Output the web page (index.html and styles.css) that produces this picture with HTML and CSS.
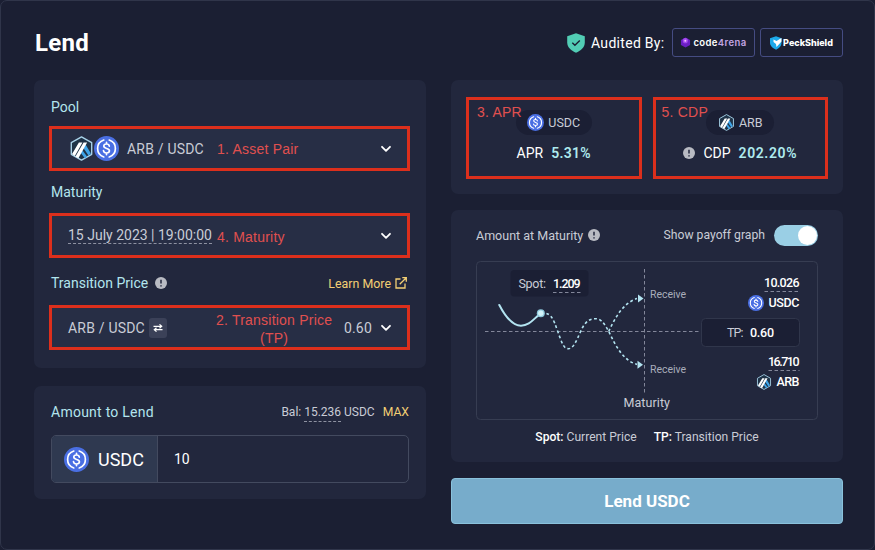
FILE: index.html
```html
<!DOCTYPE html>
<html lang="en">
<head>
  <meta charset="UTF-8" />
  <title>Lend</title>
  <meta name="viewport" content="width=device-width, initial-scale=1" />
  <link rel="stylesheet" href="styles.css">
</head>
<body>
  <!-- shared icons -->
  <svg class="sprite" width="0" height="0">
    <symbol id="usdc" viewBox="0 0 24 24">
      <circle cx="12" cy="12" r="12" fill="#4a6fe3" />
      <path d="M9.4 3.9a8.5 8.5 0 0 0 0 16.2M14.6 3.9a8.5 8.5 0 0 1 0 16.2" fill="none" stroke="#fff" stroke-width="1.6" stroke-linecap="round" />
      <path d="M14.7 9.7c-.2-1.3-1.2-2-2.7-2s-2.6.8-2.6 2c0 3 5.4 1.5 5.4 4.5 0 1.3-1.2 2.1-2.8 2.1s-2.7-.8-2.9-2.2M12 6v1.7M12 16.3V18" fill="none" stroke="#fff" stroke-width="1.6" stroke-linecap="round" />
    </symbol>
    <symbol id="arb" viewBox="0 0 24 24">
      <path d="M12 .8 21.8 6.4v11.2L12 23.2 2.2 17.6V6.4z" fill="#1f3347" stroke="#a9d3ea" stroke-width="1.3" stroke-linejoin="round" />
      <path d="M13.8 11.6 15.8 8 21 16.800 18.700 18.600zM12.600 13.400 17.500 19.800 15.200 21.400 11.200 16z" fill="#3fa4e8" />
      <path d="M9.500 6.300h3.400L5.600 19.300 2.900 17.300zM14 6.300h3.400L9 21.300 6.200 19.700z" fill="#fff" />
    </symbol>
    <symbol id="info" viewBox="0 0 12 12">
      <circle cx="6" cy="6" r="6" fill="#b9bbc3" />
      <path d="M6 2.7v3.8M6 8.2v1.2" stroke="#22273d" stroke-width="1.5" />
    </symbol>
    <symbol id="chevron" viewBox="0 0 12 8">
      <path d="M2 1.8 6 5.800l4-4" fill="none" stroke="#fff" stroke-width="1.8" stroke-linecap="round" stroke-linejoin="round" />
    </symbol>
  </svg>

  <div class="frame">
    <header class="header">
      <h1>Lend</h1>
      <div class="audit">
        <svg class="shield" viewBox="0 0 18 20">
          <path d="M9 .3 17.8 3.2v6.3c0 5-4.3 8.3-8.8 10.2C4.5 17.8.2 14.5.2 9.5V3.2z" fill="#52cdb5" />
          <path d="m5.3 9.800 2.600 2.500 4.900-4.700" fill="none" stroke="#1b1f33" stroke-width="1.4" />
        </svg>
        <span class="audit-label">Audited By:</span>
        <span class="badge">
          <svg class="orb" viewBox="0 0 12 12">
            <path d="M6 .5 11 3.200v5.600L6 11.500 1 8.800V3.200z" fill="#6a1fc4" />
            <circle cx="5.800" cy="4" r="2.800" fill="#a348ee" />
            <circle cx="5.800" cy="4" r="1.100" fill="#f2c4fb" />
          </svg>
          <span class="c4">code<span>4rena</span></span>
        </span>
        <span class="badge">
          <svg class="peck-icon" viewBox="0 0 12 14">
            <path d="M0 2.200 6 .2l5.500 2v5c0 3-2.500 5-5.500 6.500C3 12.200 0 10 0 7z" fill="#1ca9ea" />
            <path d="M3.500 3.500 6.500 5 11.500 2v3.500L6.500 11 6 8 3.500 6z" fill="#fff" />
          </svg>
          <span class="peck">PeckShield</span>
        </span>
      </div>
    </header>

    <main class="columns">
      <div class="column">
        <section class="panel pool">
          <div class="label-row"><span class="label">Pool</span></div>
          <div class="field marked">
            <svg class="token"><use href="#arb" /></svg>
            <svg class="token"><use href="#usdc" /></svg>
            <span class="pair">ARB / USDC</span>
            <svg class="chevron"><use href="#chevron" /></svg>
            <span class="note n1">1. Asset Pair</span>
          </div>
          <div class="label-row row-maturity"><span class="label">Maturity</span></div>
          <div class="field marked">
            <span class="date dashed">15 July 2023 | 19:00:00</span>
            <svg class="chevron"><use href="#chevron" /></svg>
            <span class="note n4">4. Maturity</span>
          </div>
          <div class="label-row row-price">
            <span class="label">Transition Price</span>
            <svg class="info"><use href="#info" /></svg>
            <a class="learn">Learn More
              <svg viewBox="0 0 12 12"><path d="M5.5 2H1v9h9V6.500M7.300.7h4v4M11 1 4.700 7.300" fill="none" stroke="#f3cf74" stroke-width="1.3" /></svg>
            </a>
          </div>
          <div class="field marked">
            <span class="pair first">ARB / USDC</span>
            <span class="swap">
              <svg viewBox="0 0 10 8"><path d="M.5 2.300h8M6.500.4l2.200 1.900-2.200 1.900M9.500 5.700h-8M3.500 3.800 1.300 5.700l2.200 1.900" fill="none" stroke="#fff" stroke-width="1.2" /></svg>
            </span>
            <span class="price">0.60</span>
            <svg class="chevron tight"><use href="#chevron" /></svg>
            <span class="note n2">2. Transition Price<br>(TP)</span>
          </div>
        </section>

        <section class="panel amount">
          <div class="label-row">
            <span class="label wide">Amount to Lend</span>
            <span class="balance">Bal: <span class="dashed">15.236</span> USDC</span>
            <span class="max">MAX</span>
          </div>
          <div class="amount-input">
            <div class="unit">
              <svg class="token"><use href="#usdc" /></svg>
              <span>USDC</span>
            </div>
            <span class="value">10</span>
          </div>
        </section>
      </div>

      <div class="column">
        <section class="panel rates">
          <div class="rate">
            <span class="note n3">3. APR</span>
            <span class="pill"><svg><use href="#usdc" /></svg><span>USDC</span></span>
            <div class="figure"><span>APR</span><b>5.31%</b></div>
          </div>
          <div class="rate">
            <span class="note n5">5. CDP</span>
            <span class="pill"><svg><use href="#arb" /></svg><span>ARB</span></span>
            <div class="figure"><svg class="info"><use href="#info" /></svg><span>CDP</span><b class="cdp">202.20%</b></div>
          </div>
        </section>

        <section class="panel payoff">
          <div class="payoff-head">
            <span class="at-maturity">Amount at Maturity</span>
            <svg class="info"><use href="#info" /></svg>
            <span class="show">Show payoff graph</span>
            <span class="toggle"></span>
          </div>
          <svg class="graph" viewBox="0 0 342 159">
            <rect x=".5" y=".5" width="341" height="158" rx="4" class="outline" />
            <path d="M168.500 8v126M9 70.500h216" class="guide" />
            <path d="M23.300 44C29 55 36 64.700 45 64.700S58 57 65 52.300" class="past" />
            <path d="M65 52.300C75 51 77 57 81.700 70.300S88 87.700 92.500 87.700 100 81 104.700 70.300 114 57.700 119.500 57.700 128 62 132.700 70.300C140 86 148 100 161 103.400M132.700 70.300C139 57 147 42 161 37.600" class="future" />
            <path d="M162 33.500v8l5.500-4zM161.500 99.700v8l5.500-4z" fill="#b3e4f1" />
            <circle cx="64.800" cy="52.300" r="4" fill="#8fc9dc" />
            <circle cx="64.800" cy="52.300" r="2.700" fill="#d3f4fa" />

            <rect x="34.500" y="9" width="78" height="26.500" rx="4" fill="#1b1f34" />
            <text x="42.500" y="27" textLength="27.500" class="soft">Spot:</text>
            <text x="77" y="27" textLength="27.500" class="strong">1.209</text>
            <path d="M77 31.500h27.500" class="under" />

            <text x="174" y="37" textLength="36" class="receive">Receive</text>
            <text x="174" y="111.500" textLength="36" class="receive">Receive</text>
            <text x="147.500" y="146" textLength="46.500" class="soft">Maturity</text>

            <text x="288" y="26" textLength="35.500" class="strong">10.026</text>
            <path d="M288.500 30.500h35" class="under" />
            <use href="#usdc" x="272" y="34" width="16" height="16" />
            <text x="292.500" y="46" textLength="31" class="strong">USDC</text>

            <rect x="225.500" y="57.500" width="98" height="28" rx="4" class="tp" />
            <text x="251" y="75.500" textLength="16.500" class="soft">TP:</text>
            <text x="274" y="75.500" textLength="24" class="strong">0.60</text>

            <text x="292" y="105" textLength="31.500" class="strong">16.710</text>
            <path d="M292.500 109.500h31" class="under" />
            <use href="#arb" x="280" y="113" width="16" height="16" />
            <text x="300.500" y="125" textLength="23" class="strong">ARB</text>
          </svg>
          <div class="legend">
            <span><b>Spot:</b> Current Price</span>
            <span><b>TP:</b> Transition Price</span>
          </div>
        </section>

        <button type="button" class="lend">Lend USDC</button>
      </div>
    </main>
  </div>
</body>
</html>
```
FILE: styles.css
```css
* {
  box-sizing: border-box;
}

body {
  margin: 0;
  background: #1b1f33;
  font-family: Roboto, "Liberation Sans", sans-serif;
  font-size: 14px;
  color: #c9ccd6;
}

svg {
  flex: none;
  display: block;
}

.sprite {
  position: absolute;
}

.frame {
  height: 550px;
  padding: 27px 31px 0 33px;
  border: 1px solid #30354a;
  border-radius: 7px;
}

.header {
  display: flex;
  justify-content: space-between;
  align-items: center;
  height: 29px;
}

h1 {
  margin: 0 0 0 1px;
  font-size: 24px;
  font-weight: 700;
  letter-spacing: 0.3px;
  color: #fff;
}

.audit {
  display: flex;
  align-items: center;
  color: #fff;
}

.shield {
  width: 18px;
  height: 20px;
  margin-right: 6px;
}

.audit-label {
  width: 81px;
  font-size: 14px;
  white-space: nowrap;
  letter-spacing: 0.3px;
}

.badge {
  display: flex;
  align-items: center;
  justify-content: center;
  width: 83px;
  height: 29px;
  border: 1px solid #454c82;
  border-radius: 3px;
  white-space: nowrap;
}

.badge + .badge {
  margin-left: 5px;
}

.orb {
  width: 11px;
  height: 11px;
  margin-right: 2px;
}

.c4 {
  font: 600 9.5px Inter, sans-serif;
  letter-spacing: 0.4px;
}

.c4 span {
  color: #c3a5e3;
}

.peck-icon {
  width: 12px;
  height: 14px;
  margin-right: 1px;
}

.peck {
  font: 800 9px Inter, sans-serif;
}

.columns {
  display: flex;
  gap: 25px;
  margin-top: 23px;
}

.column {
  display: flex;
  flex-direction: column;
  width: 392px;
}

.panel {
  border-radius: 7px;
  background: #22273d;
}

.pool {
  height: 288px;
  padding: 16px 17px 0;
}

.label-row {
  display: flex;
  align-items: center;
  height: 22px;
}

.label {
  font-size: 14px;
  color: #b3e5ee;
}

.wide {
  letter-spacing: 0.25px;
}

.field {
  position: relative;
  display: flex;
  align-items: center;
  height: 43px;
  margin-top: 9px;
  padding: 0 17px;
  border-radius: 5px;
  background: #272e45;
}

/* red highlight round a field */
.marked::after {
  content: "";
  position: absolute;
  inset: -1px -1px -1px -2px;
  border: 3px solid #dc2f1c;
}

.token {
  width: 25px;
  height: 25px;
}

.field .token:first-child {
  margin-left: 1px;
}

.pair {
  margin-left: 8px;
  letter-spacing: 0.2px;
}

.chevron {
  width: 12px;
  height: 8px;
  margin-left: auto;
}

.note {
  position: absolute;
  font: 14px "Liberation Sans", Arial, sans-serif;
  line-height: 18px;
  letter-spacing: 0.22px;
  color: #e0504f;
  text-align: center;
  white-space: nowrap;
}

.n1 { left: 166px; top: 13px; }
.n4 { left: 166px; top: 14px; }
.n2 { left: 165px; top: 5px; }
.n3 { left: 8px; top: 3px; }
.n5 { left: 6px; top: 3px; }

.row-maturity {
  margin-top: 11px;
}

.row-maturity + .field {
  margin-top: 11px;
}

.row-price {
  margin-top: 15px;
}

.row-price + .field {
  margin-top: 12px;
}

.dashed {
  border-bottom: 1px dashed #8e92a2;
}

.info {
  width: 12px;
  height: 12px;
}

.row-price .info {
  margin-left: 7px;
}

.learn {
  display: flex;
  align-items: center;
  gap: 4px;
  margin-left: auto;
  padding-right: 2px;
  font-size: 12.4px;
  color: #f3cf74;
}

.learn svg {
  width: 12px;
  height: 12px;
}

.first {
  margin-left: 0;
}

.swap {
  display: flex;
  align-items: center;
  justify-content: center;
  width: 18px;
  height: 20px;
  margin-left: 4px;
  border-radius: 3px;
  background: #3b4158;
}

.swap svg {
  width: 10px;
  height: 8px;
}

.price {
  margin-left: auto;
  letter-spacing: 0.2px;
}

.tight {
  margin-left: 8px;
}

.amount {
  height: 113px;
  margin-top: 18px;
  padding: 15px 17px 0;
}

.balance {
  margin-left: auto;
  font-size: 12px;
}

.balance .dashed {
  padding-bottom: 2px;
}

.max {
  margin-left: 8px;
  font-size: 12.2px;
  color: #f3cf74;
}

.amount-input {
  display: flex;
  height: 48px;
  margin-top: 12px;
  border: 1px solid #434a5f;
  border-radius: 5px;
  overflow: hidden;
}

.unit {
  display: flex;
  align-items: center;
  gap: 9px;
  width: 106px;
  padding-left: 12px;
  border-right: 1px solid #434a5f;
  background: #2f3950;
  font-size: 18px;
  color: #fff;
}

.value {
  align-self: center;
  padding-left: 16px;
  color: #fff;
}

.rates {
  display: flex;
  gap: 11px;
  height: 114px;
  padding: 17px 15px 0;
}

.rate {
  position: relative;
  display: flex;
  flex-direction: column;
  align-items: center;
  width: 176px;
  height: 82px;
  padding-top: 10px;
  border: 3px solid #dc2f1c;
}

.pill {
  display: flex;
  align-items: center;
  gap: 4px;
  height: 25px;
  padding: 0 11.5px;
  border-radius: 13px;
  background: #1b1f34;
  font-size: 12.5px;
}

.pill svg {
  width: 17px;
  height: 17px;
}

.figure {
  display: flex;
  align-items: center;
  gap: 8px;
  margin-top: 10px;
  color: #fff;
}

.figure b {
  font-weight: 600;
  letter-spacing: 0.3px;
  color: #aeeaee;
}

.figure .cdp {
  letter-spacing: 0.6px;
}

.payoff {
  height: 252px;
  margin-top: 16px;
  padding: 14px 25px 0;
}

.payoff-head {
  display: flex;
  align-items: center;
  height: 22px;
  font-size: 12.5px;
}

.payoff-head .info {
  margin-left: 5px;
}

.show {
  margin-left: auto;
  font-size: 12.2px;
}

.toggle {
  display: flex;
  justify-content: flex-end;
  width: 44px;
  height: 21px;
  margin-left: 9px;
  padding: 1px;
  border-radius: 11px;
  background: #9acfe5;
}

.toggle::after {
  content: "";
  width: 19px;
  height: 19px;
  border-radius: 50%;
  background: #fff;
}

.graph {
  width: 342px;
  height: 159px;
  margin-top: 15px;
  font-size: 12.5px;
}

.outline {
  fill: none;
  stroke: #373d52;
}

.guide,
.under {
  fill: none;
  stroke: #83879a;
  stroke-dasharray: 3.5 2.5;
}

.past,
.future {
  fill: none;
  stroke: #b3e4f1;
  stroke-width: 1.6;
}

.past {
  stroke-width: 2;
  stroke-linecap: round;
}

.future {
  stroke-dasharray: 2.8 2.5;
}

.soft {
  fill: #c9ccd6;
}

.strong {
  fill: #fff;
  font-weight: 500;
}

.receive {
  font-size: 10.5px;
  fill: #a9adbb;
}

.tp {
  fill: #1b1f34;
  stroke: #30364b;
}

.legend {
  display: flex;
  justify-content: center;
  gap: 17px;
  margin-top: 9px;
  font-size: 12.1px;
  line-height: 17px;
}

.legend b {
  font-weight: 500;
  color: #fff;
}

.lend {
  height: 46px;
  margin-top: 16px;
  border: 1px solid #8ac2dc;
  border-radius: 4px;
  background: #77accb;
  font: 700 17px Roboto, sans-serif;
  color: #fff;
}
```
